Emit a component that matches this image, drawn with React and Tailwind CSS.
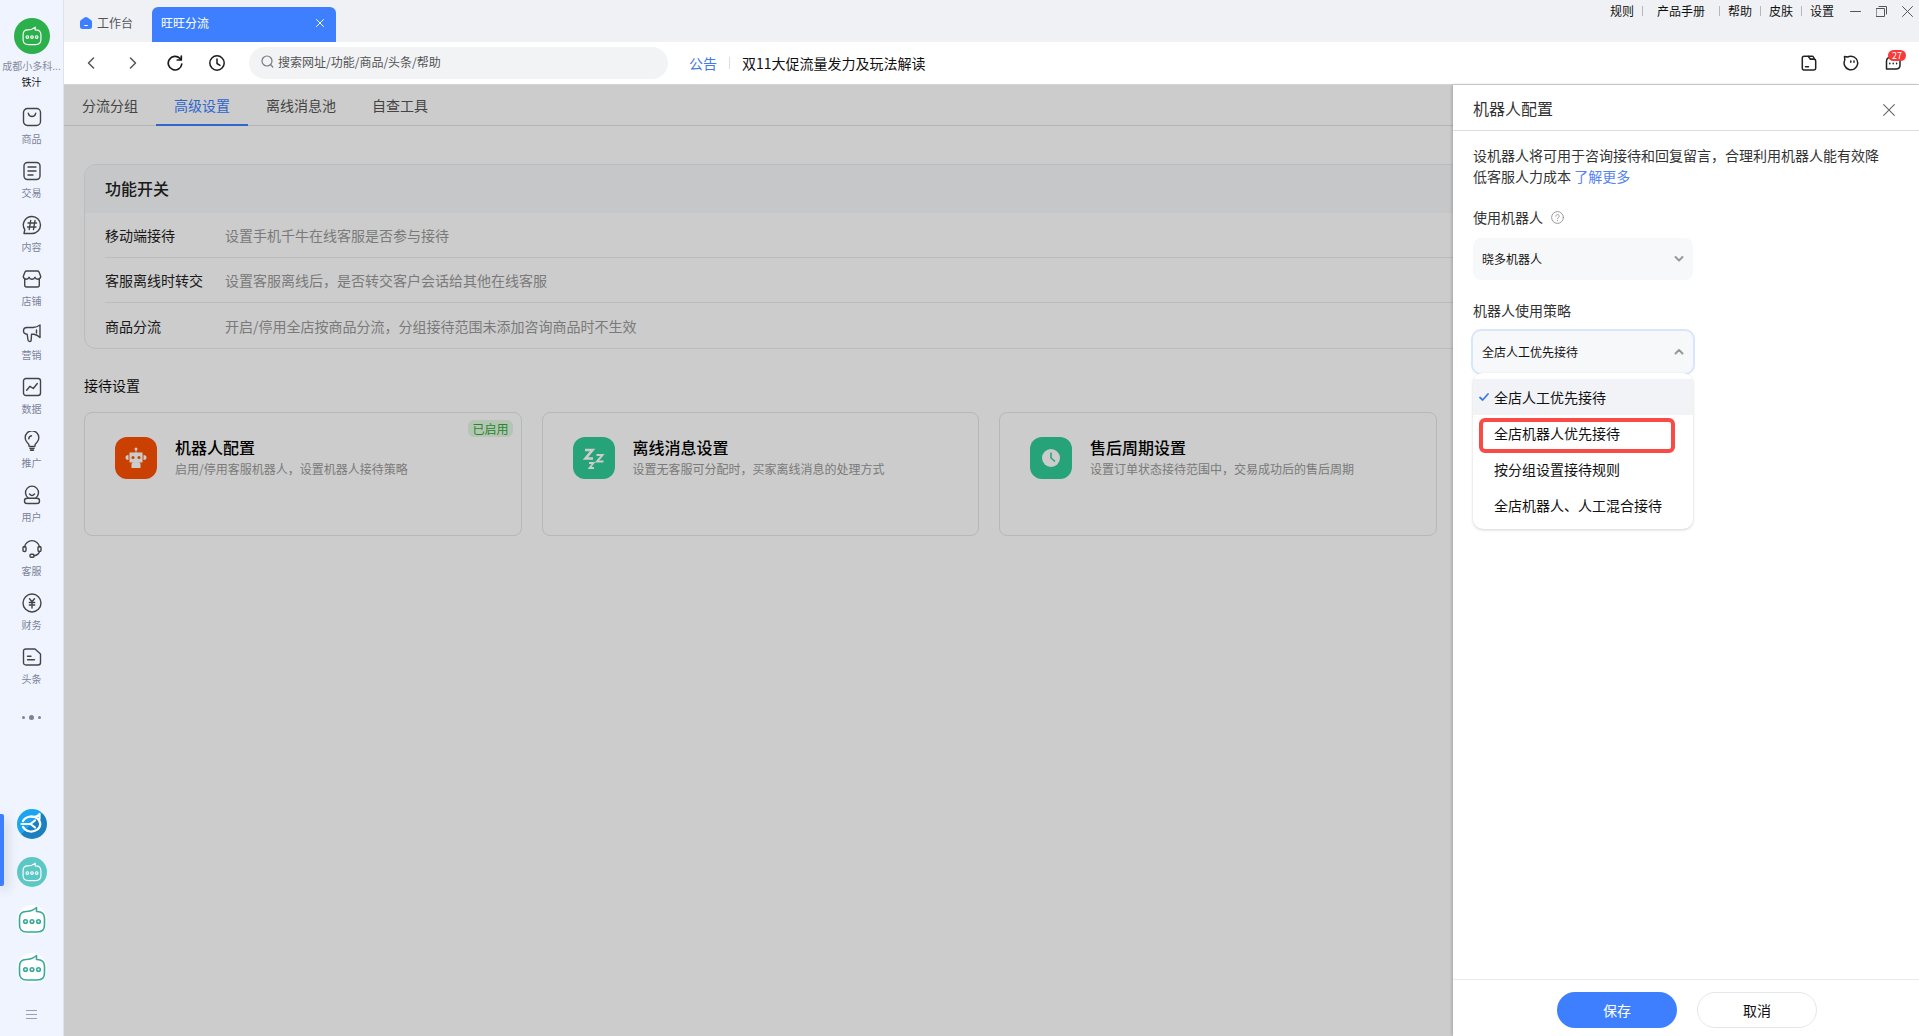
import { useState } from "react";

const Icon = ({ children, className = "size-5", box = 20, width = 1.4 }) => (
  <svg
    viewBox={`0 0 ${box} ${box}`}
    className={className}
    fill="none"
    stroke="currentColor"
    strokeWidth={width}
    strokeLinecap="round"
    strokeLinejoin="round"
    aria-hidden="true"
  >
    {children}
  </svg>
);

const BotFace = ({ className }) => (
  <Icon className={className} box={28} width={1.6}>
    <path d="M8 5.5 Q14 5.5 18.5 1.5 V5.5 H19 Q26.500 5.5 26.500 12.500 V19 Q26.500 26 19 26 H9 Q1.500 26 1.500 19 V12.500 Q1.500 5.5 8 5.5 Z" />
    <circle cx="7.500" cy="15.500" r="1.800" />
    <circle cx="14" cy="15.500" r="1.800" />
    <circle cx="20.500" cy="15.500" r="1.800" />
  </Icon>
);

const menus = [
  {
    name: "商品",
    icon: (
      <>
        <rect x="1.500" y="1.500" width="17" height="17" rx="4" />
        <path d="M6.300 6.300 Q7 9.500 10 9.500 T13.700 6.300" />
      </>
    ),
  },
  {
    name: "交易",
    icon: (
      <>
        <rect x="2" y="1.500" width="16" height="17" rx="3.500" />
        <path d="M6 6h8M6 10h8M6 14h5" />
      </>
    ),
  },
  {
    name: "内容",
    icon: (
      <>
        <path d="M10 1.500a8.500 8.500 0 1 1 0 17H2l.8-3.800A8.500 8.500 0 0 1 10 1.500z" />
        <path d="M8.700 5.500l-1.500 9M13 5.500l-1.500 9M6 8h8.500M5.500 12H14" />
      </>
    ),
  },
  {
    name: "店铺",
    icon: (
      <>
        <path d="M4.500 2h11q1 0 1.500 1l1.700 4.300q0 2.700-2.700 2.900-2 0-3-1.900-1 1.900-3 1.900t-3-1.900q-1 1.900-3 1.900-2.700-.2-2.700-2.900L3 3q.5-1 1.500-1z" />
        <path d="M2.700 10v6q0 2 2 2h10.600q2 0 2-2v-6" />
      </>
    ),
  },
  {
    name: "营销",
    icon: (
      <>
        <path d="M18 2v12.500q-3-2.700-6-3.200H9.500l-.3 5.700q0 1.500-1.500 1.500t-1.700-1.500l-.8-5.700Q1.500 11 1.500 7.800T5 4.500h6Q15 4.200 18 2z" />
        <path d="M14.500 7v3" />
      </>
    ),
  },
  {
    name: "数据",
    icon: (
      <>
        <rect x="1.500" y="1.500" width="17" height="17" rx="2.500" />
        <path d="M4.700 13.300L8 9.300l3.300 2.200 4-5" />
      </>
    ),
  },
  {
    name: "推广",
    icon: (
      <>
        <path d="M7.200 15.500q0-2.500-2.200-4.200A6.800 6.800 0 1 1 15 11.300q-2.200 1.700-2.200 4.200z" />
        <path d="M6.700 7.800Q7 5.300 9.500 4.800M8 17.500h4M8.500 19.300h3" />
      </>
    ),
  },
  {
    name: "用户",
    icon: (
      <>
        <path d="M6.300 13A6.500 6.500 0 1 1 13.700 13" />
        <path d="M7.500 9q2.500 3 5 0" />
        <rect x="2.500" y="13.200" width="15" height="5.300" rx="2.600" />
      </>
    ),
  },
  {
    name: "客服",
    icon: (
      <>
        <path d="M2.500 8A7.600 7.600 0 0 1 17.500 8M17.500 12.500q-1 3.500-5.500 4.300" />
        <rect x="1" y="7.500" width="3" height="5" rx="1.200" />
        <rect x="16" y="7.500" width="3" height="5" rx="1.200" />
        <rect x="8" y="15.300" width="4" height="3" rx="1" />
      </>
    ),
  },
  {
    name: "财务",
    icon: (
      <>
        <circle cx="10" cy="10" r="9" />
        <path d="M7.500 5.800L10 8.800l2.500-3M10 8.800V15M7.300 9.500h5.400M7.300 12h5.400" />
      </>
    ),
  },
  {
    name: "头条",
    icon: (
      <>
        <path d="M4 2h9l5.500 5v8.500q0 2.500-2.500 2.500H4q-2.500 0-2.500-2.500v-11Q1.500 2 4 2z" />
        <path d="M5.500 9.200h3.500M5.500 12.800h7" />
      </>
    ),
  },
];

const tabs = ["分流分组", "高级设置", "离线消息池", "自查工具"];

const switches = [
  { name: "移动端接待", desc: "设置手机千牛在线客服是否参与接待" },
  { name: "客服离线时转交", desc: "设置客服离线后，是否转交客户会话给其他在线客服" },
  { name: "商品分流", desc: "开启/停用全店按商品分流，分组接待范围未添加咨询商品时不生效" },
];

const cards = [
  {
    name: "机器人配置",
    desc: "启用/停用客服机器人，设置机器人接待策略",
    enabled: true,
    bg: "bg-[#fd5000]",
    icon: (
      <svg viewBox="0 0 24 24" className="size-6" fill="white" aria-hidden="true">
        <circle cx="12" cy="3" r="1.500" />
        <path d="M11.600 4h.8v3h-.8zM5.500 6.500h13v10h-13zM7.500 18q0-1.500 2-1.500h5q2 0 2 1.500v4h-9zM4.500 9v5Q1.500 14 1.500 11.500T4.500 9zM19.500 9v5q3 0 3-2.500T19.500 9z" />
        <circle cx="9" cy="11.500" r="1.500" fill="#fd5000" />
        <circle cx="15" cy="11.500" r="1.500" fill="#fd5000" />
      </svg>
    ),
  },
  {
    name: "离线消息设置",
    desc: "设置无客服可分配时，买家离线消息的处理方式",
    bg: "bg-[#30cc98]",
    icon: (
      <svg viewBox="0 0 24 24" className="size-6" fill="none" stroke="white" aria-hidden="true">
        <path d="M3 4h7.500L3.500 12.500H11" strokeWidth="2.600" />
        <path d="M14.500 9h6l-5.500 6.500h6.500" strokeWidth="2" />
        <path d="M7 17h4.500L7.500 22H12" strokeWidth="1.800" />
      </svg>
    ),
  },
  {
    name: "售后周期设置",
    desc: "设置订单状态接待范围中，交易成功后的售后周期",
    bg: "bg-[#30cc98]",
    icon: (
      <svg viewBox="0 0 24 24" className="size-6" fill="white" aria-hidden="true">
        <circle cx="12" cy="12" r="9" />
        <path d="M12 6.500V12l4 3.500" fill="none" stroke="#30cc98" strokeWidth="1.500" />
      </svg>
    ),
  },
];

const strategies = ["全店人工优先接待", "全店机器人优先接待", "按分组设置接待规则", "全店机器人、人工混合接待"];

const Sidebar = () => {
  return (
    <aside className="relative flex w-16 shrink-0 flex-col items-center border-r border-[#dde2ec] bg-[#eff4ff] pt-[18px]">
      <div className="flex size-9 items-center justify-center rounded-full bg-[#2bb04c] text-white">
        <BotFace className="size-5" />
      </div>
      <div className="mt-1 text-[10px] leading-4 whitespace-nowrap text-[#858b9c]">成都小多科...</div>
      <div className="text-[10px] leading-4 text-[#111]">铁汁</div>

      <nav className="mt-[17px] flex flex-col gap-4">
        {menus.map((m) => (
          <a key={m.name} href="#" className="flex h-[38px] flex-col items-center gap-1.5 text-[#444]">
            <Icon>{m.icon}</Icon>
            <span className="text-[10px] leading-3 text-[#7c8397]">{m.name}</span>
          </a>
        ))}
      </nav>

      <button aria-label="更多" className="mt-[22px] flex h-5 items-center gap-1">
        <span className="size-[3px] rounded-full bg-[#7c8397]" />
        <span className="size-[5px] rounded-full bg-[#7c8397]" />
        <span className="size-[3px] rounded-full bg-[#7c8397]" />
      </button>

      <div className="mt-auto flex flex-col items-center gap-[18px] pb-[14px]">
        <div className="flex size-[30px] items-center justify-center rounded-full bg-linear-to-br from-[#1ba5f0] from-50% to-[#1b80bd] to-50% text-white">
          <Icon className="size-6" box={24} width={2.2}>
            <path d="M3 9A9 7.500 0 1 1 3 15M12 5q6 0 7.500-3v5" />
            <path d="M1.500 12h9L15 8.500M10.500 12L15 15.500" />
          </Icon>
        </div>
        <div className="flex size-[30px] items-center justify-center rounded-full bg-[#5bc8c6] text-white">
          <BotFace className="size-5" />
        </div>
        <div className="flex size-[30px] items-center justify-center rounded-full bg-white text-[#36a99b]">
          <BotFace className="size-7" />
        </div>
        <div className="flex size-[30px] items-center justify-center rounded-full bg-white text-[#36a99b]">
          <BotFace className="size-7" />
        </div>
        <button aria-label="菜单" className="mt-[5px] flex h-4 flex-col items-center justify-center gap-[3px]">
          <span className="h-px w-[11px] bg-[#9a9fb5]" />
          <span className="h-px w-[11px] bg-[#9a9fb5]" />
          <span className="h-px w-[11px] bg-[#9a9fb5]" />
        </button>
      </div>
      {/* current account marker */}
      <span className="absolute bottom-[150px] left-0 h-[72px] w-1 rounded-r-xs bg-[#3d7fff] shadow-[2px_4px_12px_rgba(0,0,0,0.25)]" />
    </aside>
  );
};

const TitleBar = () => {
  return (
    <header className="flex h-[42px] justify-between bg-[#eff1f5] text-xs">
      <div className="flex items-end">
        <a href="#" className="flex h-[38px] w-[88px] items-center gap-[5px] pl-4 text-[#555]">
          <svg viewBox="0 0 12 12" className="size-3" aria-hidden="true">
            <path d="M6 0q.8 0 1.500.6l3.500 2.500q1 .7 1 1.900v4.500Q12 12 9.500 12h-7Q0 12 0 9.500V5q0-1.200 1-1.900L4.500.6Q5.200 0 6 0z" fill="#3d7fff" />
            <path d="M4.300 8.500h3.400" stroke="white" />
          </svg>
          工作台
        </a>
        <div className="flex h-[35px] w-[184px] items-center justify-between rounded-t-md bg-[#3d7fff] pr-3 pb-2 pl-[9px] text-white">
          <span className="pt-1">旺旺分流</span>
          <button aria-label="关闭标签">
            <Icon className="mt-1 size-2" box={8} width={1}>
              <path d="M.5.5l7 7M7.500.5l-7 7" />
            </Icon>
          </button>
        </div>
      </div>
      <div className="flex h-[22px] items-center text-[#111]">
        <a href="#">规则</a>
        <span className="mr-[14px] ml-2 h-[10px] w-px bg-[#b5b7bb]" />
        <a href="#">产品手册</a>
        <span className="mr-2 ml-[14px] h-[10px] w-px bg-[#b5b7bb]" />
        <a href="#">帮助</a>
        <span className="mx-2 h-[10px] w-px bg-[#b5b7bb]" />
        <a href="#">皮肤</a>
        <span className="mx-2 h-[10px] w-px bg-[#b5b7bb]" />
        <a href="#">设置</a>
        <div className="ml-4 flex items-center gap-[15px] pr-[6px] text-[#555]">
          <button aria-label="最小化">
            <Icon className="size-[11px]" box={11} width={1}>
              <path d="M.5 5.500h10" />
            </Icon>
          </button>
          <button aria-label="还原">
            <Icon className="size-[11px]" box={11} width={1}>
              <path d="M.5 2.500h8v8h-8zM3 .5h7.500V8" />
            </Icon>
          </button>
          <button aria-label="关闭">
            <Icon className="size-[11px]" box={11} width={1}>
              <path d="M.5.5l10 10M10.500.5l-10 10" />
            </Icon>
          </button>
        </div>
      </div>
    </header>
  );
};

const Toolbar = () => {
  return (
    <div className="flex h-[42px] items-center bg-white text-sm">
      <div className="flex items-center gap-[26px] pl-[19px] text-[#1b1b1b]">
        <button aria-label="后退" className="text-[#555]">
          <Icon className="size-4" box={16} width={1.5}>
            <path d="M10.500 3L5.500 8l5 5" />
          </Icon>
        </button>
        <button aria-label="前进" className="text-[#555]">
          <Icon className="size-4" box={16} width={1.5}>
            <path d="M5.500 3l5 5-5 5" />
          </Icon>
        </button>
        <button aria-label="刷新">
          <Icon className="size-4" box={16} width={1.7}>
            <path d="M13 3.500A6.800 6.800 0 1 0 14.800 9M14.300 1v4h-4" />
          </Icon>
        </button>
        <button aria-label="历史">
          <Icon className="size-4" box={16} width={1.5}>
            <circle cx="8" cy="8" r="7.200" />
            <path d="M8 4v4.500l3 1.800" />
          </Icon>
        </button>
      </div>
      <label className="ml-6 flex h-8 w-[419px] items-center gap-1 rounded-full bg-[#f1f3f5] pb-[3px] pl-3 text-[#777b85]">
        <Icon className="size-[13px]" box={13} width={1.2}>
          <circle cx="6" cy="6" r="5" />
          <path d="M9.700 9.700l2 2.300" />
        </Icon>
        <input
          type="text"
          aria-label="搜索"
          placeholder="搜索网址/功能/商品/头条/帮助"
          className="h-6 flex-1 bg-transparent pr-4 text-xs outline-none placeholder:text-[#555]"
        />
      </label>
      <a href="#" className="ml-[21px] text-[#3f7be6]">公告</a>
      <span className="mx-3 h-3 w-px bg-[#dcdee2]" />
      <a href="#" className="text-[#111]">双11大促流量发力及玩法解读</a>

      <div className="ml-auto flex items-center gap-[26px] pr-[18px] text-[#222]">
        <button aria-label="文件">
          <Icon className="size-4" box={16} width={1.5}>
            <path d="M3 1.300h4.200L9.500 4.300H13q1.700 0 1.700 1.700v7.300Q14.700 15 13 15H3q-1.700 0-1.700-1.700V3Q1.300 1.300 3 1.300z" />
            <path d="M7.500 1.300h3.700q.8 0 1.200.7l1.400 2.500M9.500 4.300h4M4.500 11.700h3" />
          </Icon>
        </button>
        <button aria-label="旺旺">
          <Icon className="size-4" box={16} width={1.5}>
            <path d="M1.500 1.500l3 .5Q6 1.200 8 1.200A6.800 6.800 0 1 1 1.800 5z" />
            <path d="M7.800 6v1.200M11 6v1.200" />
          </Icon>
        </button>
        <button aria-label="消息" className="relative">
          <Icon className="size-4" box={16} width={1.5}>
            <path d="M5 2.500h6Q15 2.500 15 6.500v3.800Q15 14 11 14H1.500V6.500Q1.500 2.500 5 2.500z" />
            <path d="M4.800 8.300v.5M8.200 8.300v.5M11.600 8.300v.5" />
          </Icon>
          <span className="absolute -top-[5px] left-[3px] flex h-[11px] w-[18px] items-center justify-center rounded-full bg-[#f93a3a] text-[9px] leading-none text-white">
            27
          </span>
        </button>
      </div>
    </div>
  );
};

const Settings = () => {
  return (
    <div className="text-sm">
      <nav className="flex h-[41px] border-b border-[#e2e4e8] text-[#555]">
        {tabs.map((t) => (
          <a
            key={t}
            href="#"
            className={
              t === "高级设置"
                ? "-mb-px flex items-center border-b-2 border-[#3d7fff] px-[18px] text-[#3d7fff]"
                : "flex items-center px-[18px]"
            }
          >
            {t}
          </a>
        ))}
      </nav>

      <div className="pt-[38px] pr-[25px] pl-5">
        <section className="overflow-hidden rounded-xl border border-[#eaecef]">
          <h2 className="flex h-12 items-center bg-[#f7f9fc] px-5 pb-0.5 text-base font-medium text-[#222]">功能开关</h2>
          <div className="px-5">
            {switches.map((s) => (
              <div key={s.name} className="flex h-[45px] items-center border-b border-[#eaecef] last:border-b-0">
                <span className="w-[120px] text-[#222]">{s.name}</span>
                <span className="text-[#999]">{s.desc}</span>
              </div>
            ))}
          </div>
        </section>

        <h3 className="mt-[26px] leading-5 text-[#111]">接待设置</h3>
        <div className="mt-[17px] grid grid-cols-4 gap-5">
          {cards.map((c) => (
            <div key={c.name} className="relative flex h-[124px] rounded-lg border border-[#e4e6ea] pt-6 pl-[30px]">
              <div className={`flex size-[42px] shrink-0 items-center justify-center rounded-xl ${c.bg}`}>{c.icon}</div>
              <div className="ml-[18px]">
                <h4 className="text-base leading-5 font-medium text-black">{c.name}</h4>
                <p className="text-xs leading-6 text-[#999]">{c.desc}</p>
              </div>
              {c.enabled && (
                <span className="absolute top-[7px] right-2 rounded-md bg-[#e2f7e2] px-1 text-xs leading-[17px] text-[#30a838]">
                  已启用
                </span>
              )}
            </div>
          ))}
        </div>
      </div>
    </div>
  );
};

const Drawer = () => {
  const [strategy, setStrategy] = useState(strategies[0]);

  return (
    <section className="absolute inset-y-0 right-0 flex w-[466px] flex-col bg-white text-sm text-[#333] shadow-[-1px_0_3px_rgba(0,0,0,0.2)]">
      <div className="flex h-[46px] items-center justify-between border-b border-[#dcdee1] pr-6 pl-5">
        <h2 className="text-base">机器人配置</h2>
        <button aria-label="关闭" className="pt-1 text-[#666]">
          <Icon className="size-3" box={12} width={1.1}>
            <path d="M.7.7l10.600 10.600M11.300.7L.7 11.300" />
          </Icon>
        </button>
      </div>

      <div className="flex-1 px-5 pt-[14px]">
        <p className="pr-3 leading-[21px]">
          设机器人将可用于咨询接待和回复留言，合理利用机器人能有效降低客服人力成本{" "}
          <a href="#" className="text-[#5584f0]">了解更多</a>
        </p>

        <div className="mt-5 flex h-5 items-center gap-2">
          <label htmlFor="robot">使用机器人</label>
          <Icon className="size-[13px] text-[#999]" box={13} width={1}>
            <circle cx="6.500" cy="6.500" r="5.900" />
            <path d="M4.800 5.200a1.700 1.700 0 1 1 2.600 1.400q-.9.500-.9 1.200M6.500 9.600v.2" />
          </Icon>
        </div>
        <div className="relative mt-[11px] w-[220px]">
          <select id="robot" className="h-[42px] w-full appearance-none rounded-lg bg-[#f7f8fa] px-[9px] text-xs text-[#111]">
            <option>晓多机器人</option>
          </select>
          <Icon className="pointer-events-none absolute top-4 right-[9px] size-[10px] text-[#999]" box={10} width={2}>
            <path d="M1.500 3L5 6.500 8.500 3" />
          </Icon>
        </div>

        <label htmlFor="strategy" className="mt-[19px] block leading-[22px]">机器人使用策略</label>
        <div className="relative mt-[10px] w-[220px]">
          <select
            id="strategy"
            value={strategy}
            onChange={(e) => setStrategy(e.target.value)}
            className="h-[42px] w-full appearance-none rounded-lg bg-[#f7f8fa] px-[9px] text-xs text-[#111] ring-2 ring-[#d9e5fb] outline-none"
          >
            {strategies.map((s) => (
              <option key={s}>{s}</option>
            ))}
          </select>
          <Icon className="pointer-events-none absolute top-4 right-[9px] size-[10px] text-[#999]" box={10} width={2}>
            <path d="M1.500 6.500L5 3l3.500 3.500" />
          </Icon>

          <ul className="absolute inset-x-0 top-full rounded-[10px] bg-white pt-[6px] pb-[6px] text-[#111] shadow-[0_1px_3px_rgba(0,0,0,0.18)]">
            {strategies.map((s) => (
              <li key={s} className={s === strategy ? "bg-[#f1f3f7]" : ""}>
                <button onClick={() => setStrategy(s)} className="flex h-9 w-full items-center pl-[6px] text-left">
                  <span className="w-[15px] text-[#3f7be6]">
                    {s === strategy && (
                      <Icon className="size-[10px]" box={10} width={1.8}>
                        <path d="M1 5.500L3.700 8 9 2" />
                      </Icon>
                    )}
                  </span>
                  {s}
                </button>
              </li>
            ))}
            {/* highlight around the robot-first option */}
            <span className="pointer-events-none absolute top-[45px] left-[6px] h-[35px] w-[196px] rounded-md border-4 border-[#fa4a46]" />
          </ul>
        </div>
      </div>

      <div className="flex h-[57px] items-center justify-center gap-5 border-t border-[#e8eaec] pt-[5px] pb-0.5 pl-0.5">
        <button className="h-9 w-[120px] rounded-full bg-[#3d7fff] text-white">保存</button>
        <button className="h-9 w-[120px] rounded-full border border-[#e4e7e9] text-[#111]">取消</button>
      </div>
    </section>
  );
};

export default function App() {
  return (
    <div className="flex min-h-screen font-['Noto_Sans_CJK_SC',sans-serif]">
      <Sidebar />
      <div className="flex min-w-0 flex-1 flex-col">
        <TitleBar />
        <Toolbar />
        <main className="relative flex-1 border-t border-[#d4d4d4] bg-white">
          <Settings />
          <div className="absolute inset-0 bg-black/20" />
          <Drawer />
        </main>
      </div>
    </div>
  );
}
